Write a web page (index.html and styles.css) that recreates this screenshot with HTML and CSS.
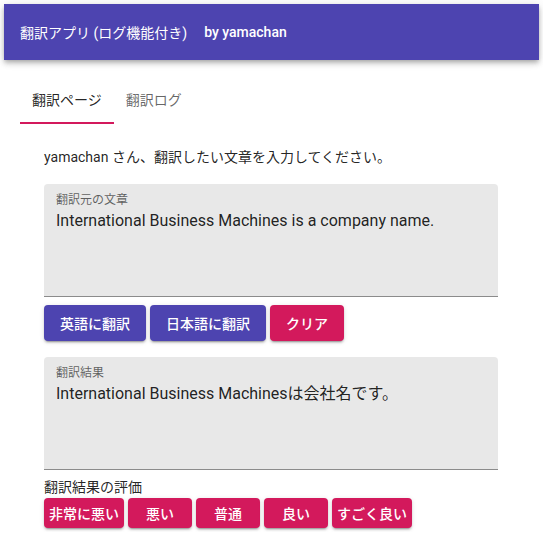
FILE: index.html
```html
<!DOCTYPE html>
<html lang="ja">
<head>
<meta charset="utf-8">
<title>翻訳アプリ</title>
<link rel="stylesheet" href="styles.css">
</head>
<body>
<header class="toolbar">
  <span class="app-title">翻訳アプリ (ログ機能付き)</span>
  <span class="app-user">by yamachan</span>
</header>
<main class="main">
  <nav class="tabs">
    <div class="tab tab-active">翻訳ページ</div>
    <div class="tab">翻訳ログ</div>
  </nav>
  <section class="tab-body">
    <p class="intro">yamachan さん、翻訳したい文章を入力してください。</p>
    <div class="field">
      <div class="field-label">翻訳元の文章</div>
      <div class="field-text">International Business Machines is a company name.</div>
    </div>
    <div class="actions">
      <button class="btn btn-primary">英語に翻訳</button>
      <button class="btn btn-primary">日本語に翻訳</button>
      <button class="btn btn-accent">クリア</button>
    </div>
    <div class="field field-result">
      <div class="field-label">翻訳結果</div>
      <div class="field-text">International Business Machinesは会社名です。</div>
    </div>
    <div class="rating-title">翻訳結果の評価</div>
    <div class="rating">
      <button class="btn btn-accent btn-small">非常に悪い</button>
      <button class="btn btn-accent btn-small">悪い</button>
      <button class="btn btn-accent btn-small">普通</button>
      <button class="btn btn-accent btn-small">良い</button>
      <button class="btn btn-accent btn-small">すごく良い</button>
    </div>
  </section>
</main>
</body>
</html>
```

FILE: styles.css
```css
* { box-sizing: border-box; }

body {
  margin: 0;
  padding: 4px;
  background: #ffffff;
  font-family: Roboto, "Noto Sans CJK JP", sans-serif;
  font-size: 14px;
  color: rgba(0, 0, 0, 0.87);
}

.toolbar {
  display: flex;
  align-items: center;
  height: 56px;
  width: 535px;
  padding: 0 16px;
  background: #4d44b0;
  color: #ffffff;
  font-size: 14px;
  box-shadow: 0 2px 4px -1px rgba(0,0,0,.2), 0 4px 5px 0 rgba(0,0,0,.14), 0 1px 10px 0 rgba(0,0,0,.12);
}

.app-title { font-weight: 400; }

.app-user {
  margin-left: 17px;
  font-weight: 500;
}

.main { padding: 16px 16px 0; }

.tabs { display: flex; }

.tab {
  height: 48px;
  padding: 0 12px;
  display: flex;
  align-items: center;
  color: rgba(0, 0, 0, 0.6);
  border-bottom: 2px solid transparent;
}

.tab-active {
  color: rgba(0, 0, 0, 0.87);
  border-bottom-color: #d3195c;
}

.tab-body { padding: 0 24px; }

.intro {
  margin: 23px 0 0;
  line-height: 20px;
}

.field {
  margin-top: 17px;
  width: 454px;
  height: 113px;
  padding: 8px 12px 0;
  background: #e8e8e8;
  border-radius: 4px 4px 0 0;
  border-bottom: 1px solid #8b8b8b;
}

.field-result { margin-top: 16px; }

.field-label {
  font-size: 12px;
  line-height: 16px;
  color: rgba(0, 0, 0, 0.6);
}

.field-text {
  font-size: 16px;
  line-height: 25px;
  color: rgba(0, 0, 0, 0.87);
}

.actions {
  display: flex;
  gap: 4px;
  margin-top: 8px;
}

.btn {
  border: none;
  border-radius: 4px;
  height: 36px;
  padding: 0 16px;
  min-width: 64px;
  font-family: Roboto, "Noto Sans CJK JP", sans-serif;
  font-size: 14px;
  font-weight: 500;
  color: #ffffff;
  box-shadow: 0 3px 1px -2px rgba(0,0,0,.2), 0 2px 2px 0 rgba(0,0,0,.14), 0 1px 5px 0 rgba(0,0,0,.12);
}

.btn-primary { background: #4d44b0; }
.btn-accent { background: #d3195c; }

.rating-title {
  margin-top: 7px;
  line-height: 20px;
}

.rating {
  display: flex;
  gap: 4px;
  margin-top: 1px;
}

.btn-small {
  height: 30px;
  padding: 0 5px;
}
```
